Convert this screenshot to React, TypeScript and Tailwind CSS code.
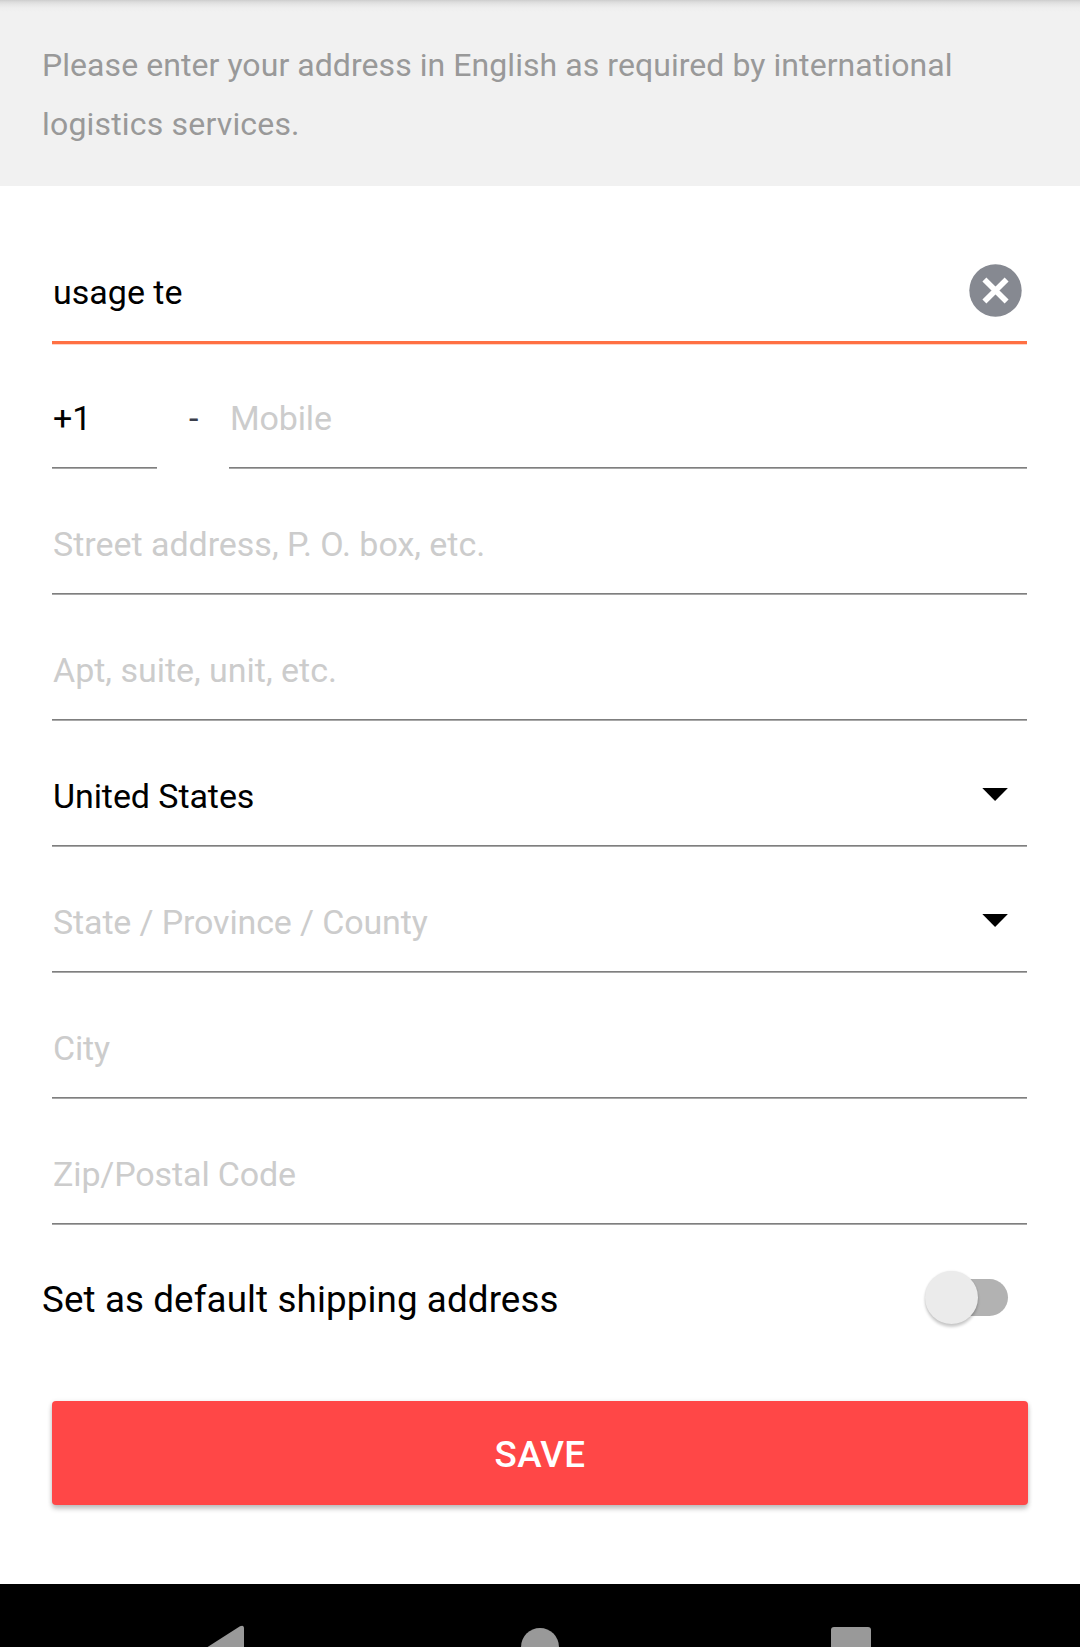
import React from 'react';

type FieldProps = {
  text: string;
  filled?: boolean;
  active?: boolean;
  tracking?: string;
  children?: React.ReactNode;
};

function Field({ text, filled = false, active = false, tracking = '', children }: FieldProps) {
  return (
    <div className="h-[126px]">
      <div className={`flex h-[124px] items-center justify-between pt-[23px] text-[34px] leading-[38px] ${filled ? 'text-black' : 'text-[#cccccc]'}`}>
        <span className={`pt-[3px] whitespace-pre ${tracking}`}>{text}</span>
        {children}
      </div>
      {active ? (
        <div className="-ml-px h-[3px] bg-[#ff7043] shadow-[0_1px_0_#ffd4c7]" />
      ) : (
        <div className="-ml-px h-[2px] border-b border-[#a8a8a8] bg-[#7f7f7f]" />
      )}
    </div>
  );
}

const Caret = () => (
  <svg className="mr-[19px] h-[13px] w-[26px]" viewBox="0 0 26 13">
    <path d="M0.3 0H25.9L13.1 13Z" fill="#000" />
  </svg>
);

const ClearIcon = () => (
  <svg className="mr-[5px] h-[53px] w-[53px]" viewBox="0 0 53 53">
    <circle cx="26.5" cy="26.5" r="26.2" fill="#868991" />
    <path d="M15.4 15.4L37.6 37.6M37.6 15.4L15.4 37.6" stroke="#fff" strokeWidth="5.6" />
  </svg>
);

export default function App() {
  return (
    <div className="flex h-[1647px] w-[1080px] flex-col overflow-hidden bg-white font-['Roboto',sans-serif]">
      <header className="h-[186px] bg-[#f1f1f1]">
        <div className="h-[12px] bg-[linear-gradient(to_bottom,#cdcdcd_0px,#dcdcdc_2px,#e7e7e7_5px,#eeeeee_8px,#f1f1f1_12px)]" />
        <p className="px-[42px] pt-[24px] text-[32px] leading-[59px] tracking-[0.06px] text-[#999999]">
          Please enter your address in English as required by international
          <br />
          <span className="tracking-[0.18px]">logistics services.</span>
        </p>
      </header>
      <main className="flex h-[1398px] flex-col pt-[31px]">
        <div className="px-[53px]">
          <Field text="usage te" filled active>
            <ClearIcon />
          </Field>
          <div className="flex">
            <div className="w-[104px]">
              <Field text="+1" filled />
            </div>
            <div className="w-[73px] pt-[56px] pl-[32px] text-[34px] leading-[38px] text-[#3a3e4a]">-</div>
            <div className="flex-1">
              <Field text="Mobile" tracking="tracking-[-0.15px]" />
            </div>
          </div>
          <Field text="Street address, P. O. box, etc." tracking="tracking-[-0.03px]" />
          <Field text="Apt, suite, unit, etc." tracking="tracking-[-0.02px]" />
          <Field text="United States" filled tracking="tracking-[-0.08px]">
            <Caret />
          </Field>
          <Field text="State / Province / County" tracking="tracking-[-0.14px]">
            <Caret />
          </Field>
          <Field text="City" tracking="tracking-[-0.2px]" />
          <Field text="Zip/Postal Code" tracking="tracking-[-0.13px]" />
        </div>
        <div className="flex h-[176px] items-start justify-between pr-[72px] pl-[42px]">
          <span className="pt-[54px] text-[36.75px] leading-[42px] tracking-[0.11px] text-black">Set as default shipping address</span>
          <div className="mt-[46px] flex h-[53px] w-[83px] items-center">
            <div className="z-10 h-[53px] w-[53px] shrink-0 rounded-full bg-[#ebebeb] shadow-[0_3px_3px_rgba(0,0,0,0.2),0_0_2px_rgba(0,0,0,0.1)]" />
            <div className="-ml-[43px] h-[37px] w-[73px] shrink-0 rounded-full bg-[#b2b2b2]" />
          </div>
        </div>
        <button className="mx-[52px] h-[104px] shrink-0 rounded-[4px] bg-[#ff4747] pt-[4px] text-[36.75px] leading-[42px] font-medium tracking-[0.3px] text-white shadow-[0_4px_5px_rgba(0,0,0,0.2),0_1px_5px_rgba(0,0,0,0.12)]">
          SAVE
        </button>
      </main>
      <nav className="flex h-[63px] items-start bg-black">
        <svg className="mt-[41px] ml-[200px] h-[22px] w-[45px]" viewBox="0 0 45 22">
          <path d="M4 24.3L40 1.2Q44 -0.6 44 3.5V24.3Z" fill="#999" />
        </svg>
        <div className="mt-[43.5px] ml-[276px] h-[39px] w-[38px] rounded-full bg-[#999999]" />
        <div className="mt-[43px] ml-[272px] h-[40px] w-[40px] rounded-[3px] bg-[#999999]" />
      </nav>
    </div>
  );
}
